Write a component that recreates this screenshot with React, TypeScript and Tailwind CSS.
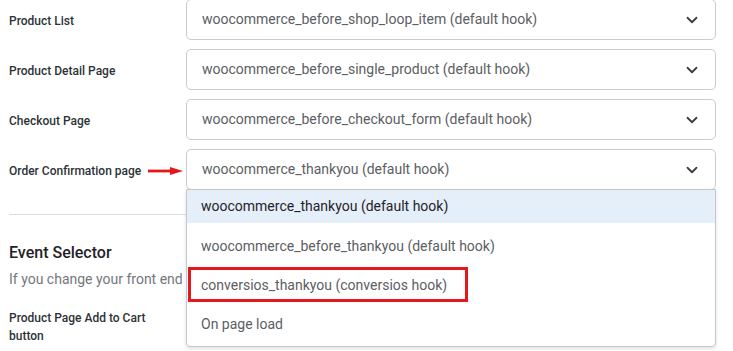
import React from 'react';
import { ChevronDown } from 'lucide-react';

const hooks = [
  { label: 'Product List', value: 'woocommerce_before_shop_loop_item (default hook)' },
  { label: 'Product Detail Page', value: 'woocommerce_before_single_product (default hook)' },
  { label: 'Checkout Page', value: 'woocommerce_before_checkout_form (default hook)' },
];

const Arrow: React.FC = () => (
  <svg width="36" height="10" viewBox="0 0 36 10" className="shrink-0">
    <rect x="0" y="3.6" width="24" height="2.8" fill="#e5171b" />
    <polygon points="22,1 35,5 22,9" fill="#e5171b" />
  </svg>
);

const SelectBox: React.FC<{ value: string; children?: React.ReactNode }> = ({ value, children }) => (
  <div className="relative flex-1">
    <div className="h-[41px] flex items-center justify-between pl-[15px] pr-[14px] border border-[#c9cbce] rounded-[5px] bg-white">
      <span className="text-[14px] text-[#5b5e63]">{value}</span>
      <ChevronDown size={18} strokeWidth={2.4} className="text-[#3a3d42]" />
    </div>
    {children}
  </div>
);

const App: React.FC = () => {
  return (
    <div className="w-[733px] h-[351px] overflow-hidden bg-white pl-[9px] pr-[17px] font-['Roboto',sans-serif]">
      <div className="flex flex-col gap-[9px] -mt-px">
        {hooks.map((h) => (
          <div key={h.label} className="flex items-center">
            <div className="w-[177px] shrink-0 text-[12px] font-medium text-[#2c3338] pt-[3px]">{h.label}</div>
            <SelectBox value={h.value} />
          </div>
        ))}
        <div className="relative z-10 flex items-center">
          <div className="w-[177px] shrink-0 flex items-center gap-[7px] pt-[3px]">
            <span className="whitespace-nowrap text-[12px] font-medium text-[#2c3338]">Order Confirmation page</span>
            <Arrow />
          </div>
          <SelectBox value="woocommerce_thankyou (default hook)">
            <div className="absolute left-0 right-0 top-full -mt-px h-[158px] border border-[#c5c7ca] rounded-b-[4px] bg-white shadow-[0_2px_4px_rgba(0,0,0,0.12)] text-[14px]">
              <div className="h-[33px] flex items-center pl-[14px] bg-[#e5effa] text-[#1f2328]">
                woocommerce_thankyou (default hook)
              </div>
              <div className="mt-[4px] h-[39px] flex items-center pl-[14px] text-[#5b5e63]">
                woocommerce_before_thankyou (default hook)
              </div>
              <div className="relative h-[39px] flex items-center pl-[14px] text-[#5b5e63]">
                conversios_thankyou (conversios hook)
                <div className="absolute left-px top-px w-[280px] h-[35px] border-[3px] border-[#e5171b]" />
              </div>
              <div className="h-[39px] flex items-center pl-[14px] text-[#5b5e63]">On page load</div>
            </div>
          </SelectBox>
        </div>
      </div>

      <hr className="mt-[24px] border-0 border-t border-[#dcdcde]" />

      <h2 className="mt-[27px] text-[16px] font-medium text-[#1f2328] leading-[22px]">Event Selector</h2>
      <p className="mt-[5px] whitespace-nowrap text-[14px] text-[#74777c] leading-[20px]">
        If you change your front end
      </p>
      <div className="mt-[20px] w-[150px] text-[12px] font-medium text-[#2c3338] leading-[18px]">
        Product Page Add to Cart button
      </div>
    </div>
  );
};

export default App;
